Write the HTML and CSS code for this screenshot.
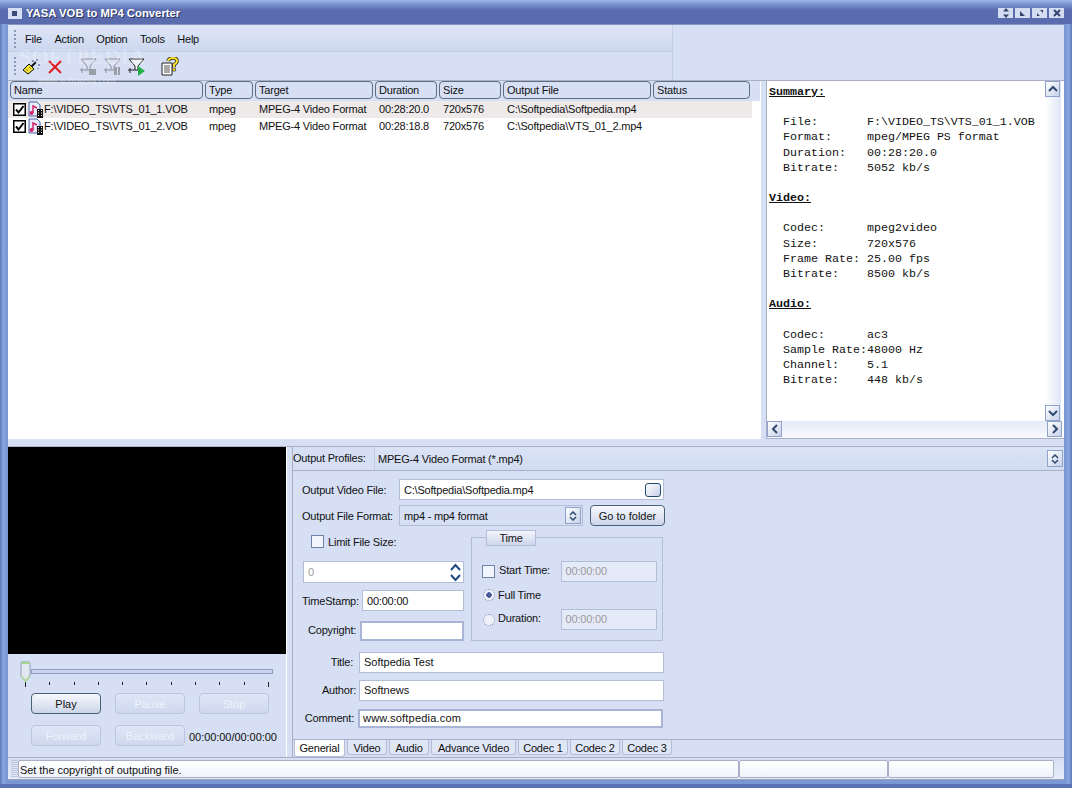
FILE: index.html
```html
<!DOCTYPE html>
<html lang="en">
<head>
    <meta charset="UTF-8">
    <title>YASA VOB to MP4 Converter</title>
    <link rel="stylesheet" href="styles.css">
</head>
<body>
    <div class="window">
        <div class="titlebar">
            <span class="app-icon"></span>
            <span class="title-text">YASA VOB to MP4 Converter</span>
            <div class="win-btns">
                <span class="win-btn"><svg width="10" height="10" viewBox="0 0 10 10"><path d="M5 0L8 3.5H2zM5 10L2 6.5H8z" fill="#34466f"/></svg></span>
                <span class="win-btn"><svg width="10" height="10" viewBox="0 0 10 10"><path d="M2 3L7 8H2z" fill="#34466f"/></svg></span>
                <span class="win-btn"><svg width="10" height="10" viewBox="0 0 10 10"><path d="M2 8V5L5 8zM8 2V5L5 2z" fill="#34466f"/></svg></span>
                <span class="win-btn"><svg width="10" height="10" viewBox="0 0 10 10"><path d="M2 2L8 8M8 2L2 8" stroke="#34466f" stroke-width="2"/></svg></span>
            </div>
        </div>

        <div class="client">
            <div class="bars">
                <div class="bars-left">
                    <div class="menubar">
                        <i class="dots dots-menu"></i>
                        <span>File</span><span>Action</span><span>Option</span><span>Tools</span><span>Help</span>
                    </div>
                    <div class="toolbar">
                        <i class="dots dots-tool"></i>
                        <svg class="tool" width="18" height="18" viewBox="0 0 18 18"><path d="M9 9L14 4" stroke="#111" stroke-width="2"/><path d="M1 12L7 6L12 11L6 16z" fill="#f3e13a" stroke="#111"/><path d="M4 11l2 2M7 9l2 2" stroke="#a08a10"/><path d="M15 1v2M11 2v2M17 6v2M16 10v1" stroke="#344a78"/></svg>
                        <svg class="tool tool-x" width="18" height="18" viewBox="0 0 18 18"><path d="M3 3L15 15M15 3L3 15" stroke="#e01c1c" stroke-width="2"/></svg>
                        <svg class="tool tool-funnel" width="20" height="20" viewBox="0 0 20 20"><path d="M3 2H18L12 9V13H9V9z" fill="#dde3f3" stroke="#8a8f9c"/><path d="M2 13h7M4 11v5" stroke="#8a8f9c"/><rect x="11" y="12" width="7" height="6" fill="#9a9ea8"/></svg>
                        <svg class="tool tool-funnel2" width="20" height="20" viewBox="0 0 20 20"><path d="M3 2H18L12 9V13H9V9z" fill="#dde3f3" stroke="#8a8f9c"/><path d="M2 13h7M4 11v5" stroke="#8a8f9c"/><rect x="12" y="10" width="3" height="8" fill="#9a9ea8"/><rect x="16" y="10" width="2" height="8" fill="#9a9ea8"/></svg>
                        <svg class="tool tool-funnel2" width="20" height="20" viewBox="0 0 20 20"><path d="M3 2H18L12 9V13H9V9z" fill="#f2f4fb" stroke="#222"/><path d="M2 13h7M4 11v5" stroke="#222"/><path d="M12 9L19 14L12 19z" fill="#22b04a"/></svg>
                        <svg class="tool tool-help" width="20" height="20" viewBox="0 0 20 20"><path d="M3 6H13V18H3z" fill="#fff" stroke="#222"/><path d="M5 9h6M5 11h6M5 13h6M5 15h6" stroke="#555"/><path d="M9 4Q10 1 14 1Q18 1 18 4Q18 6 15 7.500V10" fill="none" stroke="#222" stroke-width="3.500"/><path d="M9 4Q10 1 14 1Q18 1 18 4Q18 6 15 7.500V10" fill="none" stroke="#f6e02a" stroke-width="2"/><rect x="13.500" y="11" width="3" height="3" fill="#f6e02a" stroke="#222" stroke-width=".6"/></svg>
                    </div>
                </div>
            </div>

            <div class="top">
                <div class="list">
                    <div class="list-head">
                        <div class="col col-name"><span class="head-cell">Name</span></div>
                        <div class="col col-type"><span class="head-cell">Type</span></div>
                        <div class="col col-target"><span class="head-cell">Target</span></div>
                        <div class="col col-dur"><span class="head-cell">Duration</span></div>
                        <div class="col col-size"><span class="head-cell">Size</span></div>
                        <div class="col col-out"><span class="head-cell">Output File</span></div>
                        <div class="col col-status"><span class="head-cell">Status</span></div>
                    </div>
                    <div class="list-row selected">
                        <div class="col col-name name-cell">
                            <span class="row-check"><svg width="11" height="11" viewBox="0 0 11 11"><path d="M2 5.500L4.500 8.500L9.500 2" fill="none" stroke="#000" stroke-width="2"/></svg></span>
                            <svg class="file-icon" width="15" height="17" viewBox="0 0 15 17"><path d="M1 1H9L12 4V15H1z" fill="#e6ecfa" stroke="#4a63a8"/><path d="M5 12V5L9 7" fill="none" stroke="#d2246a" stroke-width="1.500"/><circle cx="3.500" cy="12" r="2" fill="#d2246a"/><rect x="9" y="8" width="6" height="9" fill="#111"/><path d="M10 9.500h1M13 9.500h1M10 12h1M13 12h1M10 14.500h1M13 14.500h1" stroke="#fff"/></svg>
                            <span>F:\VIDEO_TS\VTS_01_1.VOB</span>
                        </div>
                        <div class="col col-type">mpeg</div>
                        <div class="col col-target">MPEG-4 Video Format</div>
                        <div class="col col-dur">00:28:20.0</div>
                        <div class="col col-size">720x576</div>
                        <div class="col col-out">C:\Softpedia\Softpedia.mp4</div>
                        <div class="col col-status"></div>
                    </div>
                    <div class="list-row">
                        <div class="col col-name name-cell">
                            <span class="row-check"><svg width="11" height="11" viewBox="0 0 11 11"><path d="M2 5.500L4.500 8.500L9.500 2" fill="none" stroke="#000" stroke-width="2"/></svg></span>
                            <svg class="file-icon" width="15" height="17" viewBox="0 0 15 17"><path d="M1 1H9L12 4V15H1z" fill="#e6ecfa" stroke="#4a63a8"/><path d="M5 12V5L9 7" fill="none" stroke="#d2246a" stroke-width="1.500"/><circle cx="3.500" cy="12" r="2" fill="#d2246a"/><rect x="9" y="8" width="6" height="9" fill="#111"/><path d="M10 9.500h1M13 9.500h1M10 12h1M13 12h1M10 14.500h1M13 14.500h1" stroke="#fff"/></svg>
                            <span>F:\VIDEO_TS\VTS_01_2.VOB</span>
                        </div>
                        <div class="col col-type">mpeg</div>
                        <div class="col col-target">MPEG-4 Video Format</div>
                        <div class="col col-dur">00:28:18.8</div>
                        <div class="col col-size">720x576</div>
                        <div class="col col-out">C:\Softpedia\VTS_01_2.mp4</div>
                        <div class="col col-status"></div>
                    </div>
                </div>
                <div class="vsplit"></div>
                <div class="summary">
                    <div class="summary-main">
                        <pre class="summary-text"><b>Summary:</b>

  File:       F:\VIDEO_TS\VTS_01_1.VOB
  Format:     mpeg/MPEG PS format
  Duration:   00:28:20.0
  Bitrate:    5052 kb/s

<b>Video:</b>

  Codec:      mpeg2video
  Size:       720x576
  Frame Rate: 25.00 fps
  Bitrate:    8500 kb/s

<b>Audio:</b>

  Codec:      ac3
  Sample Rate:48000 Hz
  Channel:    5.1
  Bitrate:    448 kb/s</pre>
                        <div class="vscroll">
                            <span class="sb-btn"><svg width="10" height="8" viewBox="0 0 10 8"><path d="M1 6L5 2L9 6" fill="none" stroke="#2f4b70" stroke-width="2"/></svg></span>
                            <span class="sb-btn"><svg width="10" height="8" viewBox="0 0 10 8"><path d="M1 2L5 6L9 2" fill="none" stroke="#2f4b70" stroke-width="2"/></svg></span>
                        </div>
                    </div>
                    <div class="hscroll">
                        <span class="sb-btn"><svg width="8" height="10" viewBox="0 0 8 10"><path d="M6 1L2 5L6 9" fill="none" stroke="#2f4b70" stroke-width="2"/></svg></span>
                        <span class="sb-btn"><svg width="8" height="10" viewBox="0 0 8 10"><path d="M2 1L6 5L2 9" fill="none" stroke="#2f4b70" stroke-width="2"/></svg></span>
                    </div>
                </div>
            </div>

            <div class="hsplit"></div>

            <div class="bottom">
                <div class="player">
                    <div class="video"></div>
                    <div class="slider">
                        <svg class="thumb" width="11" height="21" viewBox="0 0 11 21"><path d="M1 2Q1 1 2 1H9Q10 1 10 2V15L5.500 20L1 15z" fill="#e3e7f1" stroke="#8f9cb8"/><path d="M1 2Q1 1 2 1H9Q10 1 10 2V3H1z" fill="#a9d68f"/><path d="M1 15L5.500 20L10 15" fill="none" stroke="#a9d68f" stroke-width="1.500"/></svg>
                        <div class="track"></div>
                    </div>
                    <div class="ticks">
                        <i class="tick big"></i><i class="tick"></i><i class="tick"></i><i class="tick"></i><i class="tick"></i><i class="tick"></i><i class="tick"></i><i class="tick"></i><i class="tick"></i><i class="tick"></i><i class="tick big"></i>
                    </div>
                    <div class="play-row">
                        <button class="btn btn-play">Play</button>
                        <button class="btn disabled">Pause</button>
                        <button class="btn disabled">Stop</button>
                    </div>
                    <div class="play-row second">
                        <button class="btn disabled">Forward</button>
                        <button class="btn disabled">Backward</button>
                        <span class="clock">00:00:00/00:00:00</span>
                    </div>
                </div>
                <div class="vsplit2"></div>
                <div class="settings">
                    <div class="profiles">
                        <span class="profiles-label">Output Profiles:</span>
                        <div class="profiles-box">
                            <span>MPEG-4 Video Format (*.mp4)</span>
                            <span class="combo-btn"><svg width="8" height="10" viewBox="0 0 8 10"><path d="M1 4L4 1L7 4M1 6L4 9L7 6" fill="none" stroke="#2f4b70" stroke-width="1.500"/></svg></span>
                        </div>
                    </div>
                    <div class="form">
                        <div class="form-row row-file">
                            <label class="lbl lbl-file">Output Video File:</label>
                            <div class="field field-file">C:\Softpedia\Softpedia.mp4<span class="browse"></span></div>
                        </div>
                        <div class="form-row row-format">
                            <label class="lbl lbl-file">Output File Format:</label>
                            <div class="field field-format">mp4 - mp4 format<span class="combo-btn"><svg width="8" height="10" viewBox="0 0 8 10"><path d="M1 4L4 1L7 4M1 6L4 9L7 6" fill="none" stroke="#2f4b70" stroke-width="1.500"/></svg></span></div>
                            <button class="btn btn-folder">Go to folder</button>
                        </div>
                        <div class="middle">
                            <div class="middle-left">
                                <div class="limit"><span class="check"></span><span>Limit File Size:</span></div>
                                <div class="field field-spin"><span class="muted">0</span>
                                    <span class="spin-arrows">
                                        <svg width="13" height="9" viewBox="0 0 13 9"><path d="M2 7L6.500 2L11 7" fill="none" stroke="#1d4a80" stroke-width="2"/></svg>
                                        <svg width="13" height="9" viewBox="0 0 13 9"><path d="M2 2L6.500 7L11 2" fill="none" stroke="#1d4a80" stroke-width="2"/></svg>
                                    </span>
                                </div>
                                <div class="form-row row-stamp">
                                    <label class="lbl lbl-stamp">TimeStamp:</label>
                                    <div class="field field-stamp">00:00:00</div>
                                </div>
                                <div class="form-row row-copy">
                                    <label class="lbl lbl-copy">Copyright:</label>
                                    <div class="field field-copy focus"></div>
                                </div>
                            </div>
                            <div class="time-box">
                                <span class="time-legend">Time</span>
                                <div class="time-row row-start"><span class="check"></span><span class="time-label">Start Time:</span><div class="field field-time muted">00:00:00</div></div>
                                <div class="time-row row-full"><span class="radio on"></span><span>Full Time</span></div>
                                <div class="time-row row-dur"><span class="radio"></span><span class="time-label time-label-dur">Duration:</span><div class="field field-time muted">00:00:00</div></div>
                            </div>
                        </div>
                        <div class="form-row row-title">
                            <label class="lbl lbl-title">Title:</label>
                            <div class="field field-wide">Softpedia Test</div>
                        </div>
                        <div class="form-row row-author">
                            <label class="lbl lbl-author">Author:</label>
                            <div class="field field-wide">Softnews</div>
                        </div>
                        <div class="form-row row-comment">
                            <label class="lbl lbl-comment">Comment:</label>
                            <div class="field field-comment focus">www.softpedia.com</div>
                        </div>
                    </div>
                    <div class="tabs">
                        <span class="tab active tab-gen">Generial</span>
                        <span class="tab tab-video">Video</span>
                        <span class="tab tab-video">Audio</span>
                        <span class="tab tab-adv">Advance Video</span>
                        <span class="tab tab-codec">Codec 1</span>
                        <span class="tab tab-codec">Codec 2</span>
                        <span class="tab tab-codec">Codec 3</span>
                    </div>
                </div>
            </div>

            <div class="statusbar">
                <span class="grip"></span>
                <div class="status-cell status-main">Set the copyright of outputing file.</div>
                <div class="status-cell status-mid"></div>
                <div class="status-cell status-end"></div>
            </div>
        </div>

        <div class="watermark">SOFTPEDIA</div>
        <div class="watermark-url">www.softpedia.com</div>
    </div>
</body>
</html>
```

FILE: styles.css
```css
* {
    box-sizing: border-box;
}
html, body {
    margin: 0;
    padding: 0;
}
body {
    width: 1072px;
    height: 788px;
    overflow: hidden;
    background: #6f8ccb;
    font-family: "Liberation Sans", Arial, sans-serif;
    font-size: 11px;
    letter-spacing: -0.2px;
    color: #111;
}
.window {
    position: relative;
    width: 1072px;
    height: 788px;
    display: flex;
    flex-direction: column;
    padding: 0 8px 8px;
    background: linear-gradient(90deg, #5c72b4 0, #8aa6de 3px, #7a97d3 7px, #7a97d3 1065px, #8aa6de 1069px, #5c72b4 100%);
    box-shadow: inset 0 -4px 0 #5c72b4;
}
.titlebar {
    height: 24px;
    margin: 0 -8px;
    padding: 2px 8px 0;
    display: flex;
    align-items: center;
    background: linear-gradient(#9cb8e4 0, #7c96d2 4px, #5a6cae 10px, #5a6cae 100%);
}
.app-icon {
    width: 14px;
    height: 11px;
    margin-right: 4px;
    background: #d6dff3;
    border: 3px solid #d6dff3;
    border-left-width: 4px;
    border-right-width: 5px;
    box-shadow: inset 0 0 0 4px #3b4a78;
}
.title-text {
    color: #fff;
    font-weight: bold;
    font-size: 11.300px;
    letter-spacing: 0;
    text-shadow: 1px 1px 0 #2c3560;
}
.win-btns {
    margin-left: auto;
    display: flex;
    gap: 2px;
}
.win-btn {
    width: 15px;
    height: 10px;
    display: flex;
    align-items: center;
    justify-content: center;
    background: #d4dcf2;
}
.client {
    flex: 1;
    display: flex;
    flex-direction: column;
    background: #d6dff3;
    border-top: 1px solid #8494c3;
    min-height: 0;
}

/* menu and tool bars */
.bars {
    height: 56px;
    background: #d6dff3;
    border-bottom: 1px solid #a9afc6;
}
.bars-left {
    width: 665px;
    height: 55px;
}
.menubar {
    height: 27px;
    padding: 2px 0 0 6px;
    display: flex;
    align-items: center;
    gap: 12.500px;
    background: linear-gradient(#dfe6f6, #ccd7ef);
    border-bottom: 1px solid #c3cfe9;
    border-right: 1px solid #c3cfe9;
}
.dots {
    flex: none;
    width: 2px;
    background: repeating-linear-gradient(#8d99b8 0, #8d99b8 2px, transparent 2px, transparent 4px);
}
.dots-menu {
    height: 18px;
    margin-right: -3.500px;
}
.dots-tool {
    height: 20px;
    margin-right: 6px;
}
.toolbar {
    height: 28px;
    padding: 2px 0 0 6px;
    display: flex;
    align-items: center;
    border-right: 1px solid #c3cfe9;
}
.tool {
    flex: none;
}
.tool-x {
    margin-left: 6px;
}
.tool-funnel {
    margin-left: 14px;
}
.tool-funnel2 {
    margin-left: 4px;
}
.tool-help {
    margin-left: 13px;
}

/* file list + summary */
.top {
    height: 358px;
    display: flex;
}
.list {
    width: 752px;
    background: #fff;
}
.list-head {
    height: 20px;
    padding-left: 2px;
    display: flex;
    background: #d6dff3;
}
.list-row {
    width: 744px;
    height: 17px;
    padding: 0 0 1px 2px;
    display: flex;
    align-items: center;
}
.list-row.selected {
    background: #eeeaea;
}
.col {
    flex: none;
    padding-left: 4px;
    white-space: nowrap;
}
.list-head .col {
    padding: 0 2px 0 0;
}
.col-name { width: 195px; }
.col-type { width: 50px; }
.col-target { width: 120px; }
.col-dur { width: 64px; }
.col-size { width: 64px; }
.col-out { width: 150px; }
.col-status { width: 99px; }
.head-cell {
    display: block;
    height: 18px;
    line-height: 16px;
    padding-left: 3px;
    background: #d6dff3;
    border: 1px solid #5f6d80;
    border-radius: 4px;
}
.name-cell {
    display: flex;
    align-items: center;
    padding-left: 3px;
}
.row-check {
    width: 13px;
    height: 13px;
    margin-right: 2px;
    background: #fff;
    border: 1px solid #000;
    box-shadow: inset 0 0 0 .5px #000;
    display: flex;
    align-items: center;
    justify-content: center;
}
.file-icon {
    margin-right: 1px;
}
.vsplit {
    width: 7px;
    background: #d6dff3;
    border-left: 1px solid #fff;
    border-right: 1px solid #a9afc6;
}
.summary {
    flex: 1;
    display: flex;
    flex-direction: column;
    background: #fff;
    border-bottom: 1px solid #a9afc6;
}
.summary-main {
    flex: 1;
    display: flex;
    min-height: 0;
}
.summary-text {
    flex: 1;
    margin: 0;
    padding: 4px 0 0 2px;
    font-family: "Liberation Mono", "Courier New", monospace;
    font-size: 11.670px;
    line-height: 15.160px;
    letter-spacing: 0;
    color: #111;
    overflow: hidden;
}
.summary-text b {
    text-decoration: underline;
}
.vscroll {
    width: 16px;
    margin-right: 3px;
    display: flex;
    flex-direction: column;
    justify-content: space-between;
    background: linear-gradient(90deg, #fff, #dfe6f6);
}
.hscroll {
    height: 17px;
    margin-right: 2px;
    display: flex;
    justify-content: space-between;
    background: linear-gradient(#e4eaf8, #f8f9fd);
}
.sb-btn {
    width: 15px;
    height: 16px;
    display: flex;
    align-items: center;
    justify-content: center;
    background: linear-gradient(135deg, #fff, #c6d1ea);
    border: 1px solid #8fa2c8;
}
.hsplit {
    height: 8px;
    background: #d6dff3;
    border-bottom: 1px solid #a9afc6;
}

/* player */
.bottom {
    height: 310px;
    display: flex;
}
.player {
    width: 278px;
}
.video {
    height: 207px;
    background: #000;
}
.slider {
    height: 21px;
    margin-top: 7px;
    padding-left: 12px;
    display: flex;
    align-items: center;
}
.thumb {
    flex: none;
}
.track {
    width: 242px;
    height: 5px;
    margin-top: -1px;
    background: #c9d3eb;
    border: 1px solid #8f9cc8;
}
.ticks {
    width: 244px;
    margin: 0 0 0 17px;
    height: 5px;
    display: flex;
    justify-content: space-between;
    align-items: flex-start;
}
.tick {
    width: 1px;
    height: 3px;
    background: #222;
}
.tick.big {
    height: 5px;
}
.play-row {
    margin-top: 6px;
    padding-left: 23px;
    display: flex;
    gap: 14px;
    align-items: center;
}
.play-row.second {
    margin-top: 11px;
}
.btn {
    width: 70px;
    height: 21px;
    padding: 0;
    font-family: inherit;
    font-size: 11px;
    color: #111;
    background: linear-gradient(#f7f9fd, #ccd5ea);
    border: 1px solid #4a6278;
    border-radius: 4px;
}
.btn.disabled {
    color: #f0f3fb;
    background: linear-gradient(#dfe6f6, #cfd8ee);
    border-color: #bcc6df;
}
.clock {
    margin: 3px 0 0 -10px;
    letter-spacing: -0.05px;
    white-space: nowrap;
}
.vsplit2 {
    width: 7px;
    background: #d6dff3;
    border-left: 1px solid #fff;
    border-right: 1px solid #a9afc6;
}

/* settings */
.settings {
    flex: 1;
    display: flex;
    flex-direction: column;
}
.profiles {
    height: 24px;
    display: flex;
    border-bottom: 1px solid #a9afc6;
    box-shadow: 0 1px 0 #fff;
    align-items: flex-start;
}
.profiles-label {
    width: 81px;
    line-height: 21px;
    margin-top: 1px;
}
.profiles-box {
    flex: 1;
    height: 23px;
    padding-left: 3px;
    display: flex;
    align-items: center;
    justify-content: space-between;
    border-left: 1px solid #c2cce6;
    background: linear-gradient(#dbe3f5, #d2dcf1);
}
.combo-btn {
    width: 16px;
    height: 17px;
    display: flex;
    align-items: center;
    justify-content: center;
    background: linear-gradient(135deg, #fff, #c6d1ea);
    border: 1px solid #8fa2c8;
    margin-right: 1px;
}
.form {
    flex: 1;
    padding: 8px 0 0 9px;
    background: #d6dff3;
}
.form-row {
    display: flex;
    align-items: center;
}
.lbl {
    flex: none;
}
.lbl-file {
    width: 97px;
}
.field {
    height: 21px;
    padding-left: 4px;
    display: flex;
    align-items: center;
    background: #fff;
    border: 1px solid #b4bdd8;
    white-space: nowrap;
}
.field.focus {
    border: 2px solid #aab4d6;
    padding-left: 3px;
}
.muted {
    color: #9a9a9a;
}
.field-file {
    width: 265px;
    justify-content: space-between;
}
.browse {
    width: 16px;
    height: 14px;
    margin-right: 2px;
    background: linear-gradient(135deg, #fff, #c6d1ea);
    border: 1px solid #1f4a70;
    border-radius: 3px;
}
.row-format {
    margin-top: 5px;
}
.field-format {
    width: 184px;
    justify-content: space-between;
    background: #d6dff3;
}
.btn-folder {
    width: 75px;
    margin-left: 7px;
}
.middle {
    display: flex;
    margin-top: 4px;
}
.middle-left {
    width: 168px;
    margin-left: 1px;
}
.limit {
    height: 21px;
    padding-left: 8px;
    margin-top: 1px;
    display: flex;
    align-items: center;
    gap: 4px;
}
.check {
    flex: none;
    width: 13px;
    height: 13px;
    background: #f2f5fc;
    border: 1px solid #6f82a8;
    display: block;
}
.field-spin {
    width: 161px;
    height: 22px;
    margin-top: 9px;
    justify-content: space-between;
}
.spin-arrows {
    display: flex;
    flex-direction: column;
    gap: 1px;
    margin-right: 1px;
}
.row-stamp {
    margin-top: 7px;
}
.lbl-stamp {
    width: 59px;
    margin-left: -1px;
}
.field-stamp {
    width: 102px;
    margin-left: 1px;
}
.row-copy {
    margin-top: 10px;
}
.lbl-copy {
    width: 57px;
    padding: 0 0 3px 5px;
    white-space: nowrap;
}
.field-copy {
    width: 104px;
    height: 20px;
}
.time-box {
    position: relative;
    width: 192px;
    height: 104px;
    margin-top: 7px;
    padding: 23px 5px 0 10px;
    border: 1px solid #b4bdd8;
}
.time-legend {
    position: absolute;
    left: 14px;
    top: -8px;
    width: 50px;
    height: 16px;
    line-height: 14px;
    text-align: center;
    background: linear-gradient(#f4f6fc, #ccd5ea);
    border: 1px solid #b4bdd8;
}
.time-row {
    display: flex;
    align-items: center;
    height: 21px;
}
.row-start .check {
    margin-right: 4px;
}
.time-label {
    width: 62px;
    padding-bottom: 3px;
}
.time-label-dur {
    width: 63px;
}
.row-full {
    margin-top: 2px;
}
.row-dur {
    margin-top: 4px;
}
.radio {
    flex: none;
    width: 12px;
    height: 12px;
    margin: 0 3px 0 1px;
    border-radius: 50%;
    background: #eef1fa;
    border: 1px dotted #7f8cac;
}
.radio.on {
    background: radial-gradient(circle, #4a5a98 0, #4a5a98 2.500px, #eef1fa 3px);
}
.field-time {
    width: 97px;
    padding-bottom: 1px;
    background: #e4eaf8;
}
.row-title {
    margin-top: 11px;
}
.lbl-title {
    width: 51px;
    padding-bottom: 2px;
    text-align: right;
}
.field-wide {
    width: 305px;
    margin-left: 6px;
    padding-bottom: 1px;
    letter-spacing: 0;
}
.row-author {
    margin-top: 7px;
}
.lbl-author {
    width: 54px;
    padding-bottom: 2px;
    text-align: right;
}
.row-author .field-wide {
    margin-left: 3px;
}
.row-comment {
    margin-top: 8px;
}
.lbl-comment {
    width: 52px;
    padding-bottom: 2px;
    text-align: right;
}
.field-comment {
    width: 305px;
    height: 19px;
    margin-left: 4px;
    padding-bottom: 1px;
    letter-spacing: 0.2px;
}
.tabs {
    height: 18px;
    padding-left: 1px;
    display: flex;
    gap: 2px;
    background: #d6dff3;
    border-top: 1px solid #a9afc6;
}
.tab {
    height: 15px;
    line-height: 16px;
    text-align: center;
    background: #dfe6f6;
    border: 1px solid #b4bdd8;
    border-top: none;
    border-radius: 0 0 3px 3px;
}
.tab.active {
    height: 17px;
    background: #fff;
}
.tab-gen { width: 51px; }
.tab-video { width: 40px; }
.tab-adv { width: 85px; }
.tab-codec { width: 50px; }

/* status bar */
.statusbar {
    height: 23px;
    padding: 2px 10px 1px 3px;
    display: flex;
    background: linear-gradient(#d6dff3, #e6ecf8);
    border-top: 1px solid #a9afc6;
    border-bottom: 1px solid #9aa2b8;
}
.grip {
    width: 7px;
    background: repeating-linear-gradient(#bcc6df 0, #bcc6df 1px, transparent 1px, transparent 2px);
}
.status-cell {
    height: 100%;
    line-height: 18px;
    padding-left: 1px;
    letter-spacing: -0.05px;
    background: linear-gradient(#fff, #eef2fb);
    border: 1px solid #a9afc6;
    border-radius: 2px;
}
.status-main {
    width: 721px;
}
.status-mid {
    width: 149px;
}
.status-end {
    width: 166px;
}

/* faint site stamp over the toolbar */
.watermark {
    position: absolute;
    left: 19px;
    top: 44px;
    font-family: "Liberation Serif", serif;
    font-size: 22px;
    letter-spacing: 1px;
    color: rgba(255, 255, 255, .3);
    pointer-events: none;
}
.watermark-url {
    position: absolute;
    left: 38px;
    top: 76px;
    font-size: 9px;
    letter-spacing: 0;
    color: rgba(255, 255, 255, .4);
    pointer-events: none;
}
```
